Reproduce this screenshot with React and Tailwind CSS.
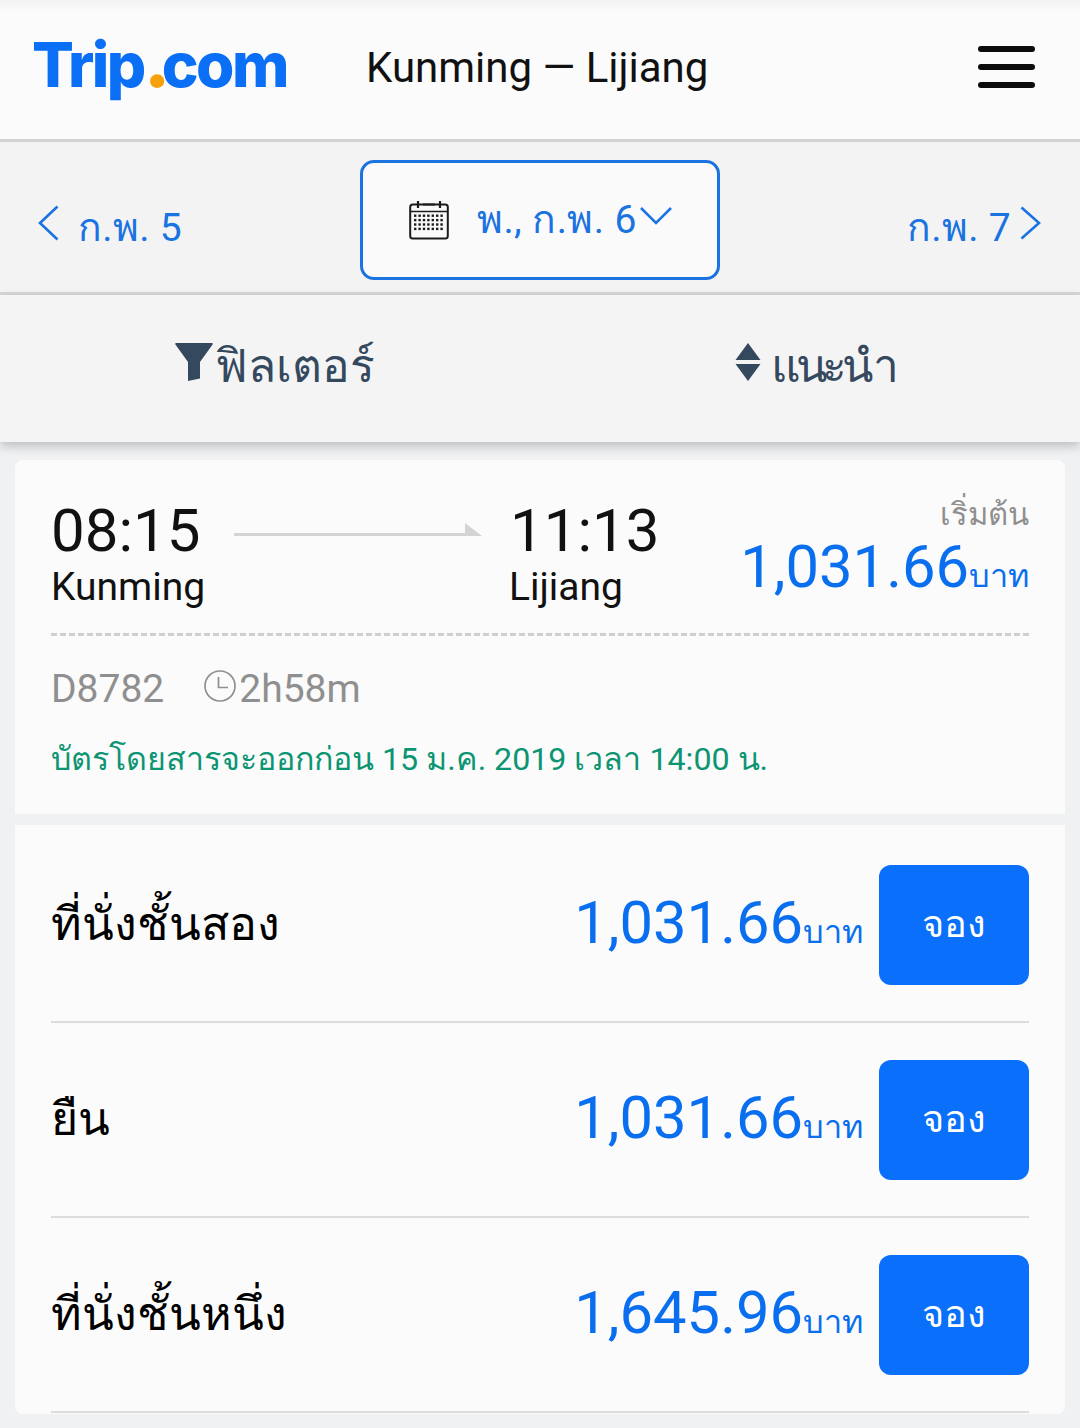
import React from 'react';

function Chevron({ d, w, h, className = '' }) {
    return (
        <svg width={w} height={h} viewBox={`0 0 ${w} ${h}`} fill="none" stroke="#1a73e0" strokeWidth="2.6" className={className}>
            <path d={d} />
        </svg>
    );
}

function CalendarIcon() {
    const dots = [];
    for (let r = 0; r < 4; r++) {
        for (let c = 0; c < 7; c++) {
            dots.push(<rect key={`${r}-${c}`} x={5 + c * 4.4} y={14.5 + r * 4.4} width="2.4" height="2.4" fill="#1c1c1c" />);
        }
    }
    return (
        <svg width="40" height="40" viewBox="0 0 40 40" fill="none">
            <rect x="1.2" y="4.5" width="37.6" height="34" rx="2.5" stroke="#1c1c1c" strokeWidth="2" />
            <path d="M1 11.5H39" stroke="#1c1c1c" strokeWidth="1.5" />
            <path d="M9 1v7M31 1v7M14 4.5h12" stroke="#1c1c1c" strokeWidth="2.2" />
            {dots}
        </svg>
    );
}

function FilterIcon() {
    return (
        <svg width="38" height="38" viewBox="0 0 38 38">
            <path d="M1 0h36c.8 0 1 .8.6 1.4L25 19v16.5L13 38V19L.4 1.4C0 .8.2 0 1 0z" fill="#34495e" />
        </svg>
    );
}

function SortIcon() {
    return (
        <svg width="26" height="38" viewBox="0 0 26 38">
            <path d="M13 0l12.5 17H.5z" fill="#34495e" />
            <path d="M.5 21h25L13 38z" fill="#34495e" />
        </svg>
    );
}

function ClockIcon() {
    return (
        <svg width="34" height="34" viewBox="0 0 34 34" fill="none" stroke="#8f8f8f" strokeWidth="1.7">
            <circle cx="17" cy="17" r="15" />
            <path d="M15.5 8v10.5H25" />
        </svg>
    );
}

function Price({ value }) {
    return (
        <div className="flex items-baseline text-[#0a6fef] leading-none">
            <span className="text-[59.7px] leading-none">{value}</span>
            <span className="text-[32.5px] leading-none">บาท</span>
        </div>
    );
}

function SeatRow({ name, price }) {
    return (
        <div className="h-[195px] flex items-center justify-between border-b-2 border-[#dcdcdc]">
            <span className="text-[46.5px] text-black">{name}</span>
            <div className="flex items-center gap-[16px]">
                <div className="-mt-[2px]">
                    <Price value={price} />
                </div>
                <button className="w-[150px] h-[120px] rounded-[12px] bg-[#0a6ffa] text-white text-[38px] font-medium">จอง</button>
            </div>
        </div>
    );
}

export default function App() {
    return (
        <div className='w-[1080px] h-[1428px] overflow-hidden bg-[#f0f1f3] font-["Roboto","Noto_Sans","DejaVu_Sans",sans-serif]'>
            {/* Header */}
            <header className="h-[142px] bg-gradient-to-b from-[#f2f2f2] to-[#fbfbfb] to-[12px] border-b-[3px] border-[#d2d2d2] pl-[32px] pr-[45px] pb-[4px] flex items-center">
                <div className="w-[334px] font-['Inter',sans-serif] text-[62px] font-extrabold tracking-[-2.5px] text-[#0a6ff5] leading-none -mt-[5px]">
                    Trip<span className="text-[76px] leading-[0] tracking-[-9px] text-[#f5a10c]">.</span>com
                </div>
                <div className="flex-1 text-[42px] text-[#111]">Kunming — Lijiang</div>
                <div className="w-[57px] flex flex-col gap-[12px] -mt-[2px]">
                    <span className="h-[6px] rounded-full bg-[#0c0c0c]"></span>
                    <span className="h-[6px] rounded-full bg-[#0c0c0c]"></span>
                    <span className="h-[6px] rounded-full bg-[#0c0c0c]"></span>
                </div>
            </header>

            {/* Date picker */}
            <div className="h-[153px] bg-[#f3f3f3] border-b-[3px] border-[#d8d8d8] px-[36px] flex items-center justify-between text-[#1a73e0] text-[39px]">
                <div className="w-[324px] flex items-center gap-[19px] pt-[22px]">
                    <Chevron w={22} h={36} d="M20.5 1.5L3 18l17.5 16.5" className="-mt-[10px] ml-[1px]" />
                    <span className="tracking-[0.3px]">ก.พ. 5</span>
                </div>
                <div className="w-[360px] h-[120px] mt-[6px] rounded-[14px] border-[3px] border-[#1a73e0] bg-[#fafafa] flex items-center pl-[46px]">
                    <CalendarIcon />
                    <span className="ml-[28px] tracking-[0.4px]">พ., ก.พ. 6</span>
                    <Chevron w={32} h={20} d="M1 2l15 15L31 2" className="-mt-[8px] ml-[3px]" />
                </div>
                <div className="w-[324px] flex items-center justify-end gap-[9px] pt-[22px]">
                    <span className="tracking-[0.3px]">ก.พ. 7</span>
                    <Chevron w={21} h={34} d="M1.5 1.5L19 17 1.5 32.5" className="-mt-[10px] mr-[3px]" />
                </div>
            </div>

            {/* Filter bar */}
            <div className="h-[147px] bg-[#f4f4f4] shadow-[0_4px_10px_rgba(0,0,0,0.22)] relative grid grid-cols-2 text-[46px] text-[#34495e] pb-[4px]">
                <div className="flex items-center justify-center gap-[2px] ml-[10px]">
                    <span className="-mt-[10px]"><FilterIcon /></span>
                    <span>ฟิลเตอร์</span>
                </div>
                <div className="flex items-center justify-center gap-[10px] ml-[8px]">
                    <span className="-mt-[10px]"><SortIcon /></span>
                    <span className="tracking-[-5px]">แนะนำ</span>
                </div>
            </div>

            {/* Train card */}
            <div className="mx-[15px] mt-[18px] h-[354px] bg-[#fbfbfb] rounded-t-[8px] px-[36px] pt-[33px]">
                <div className="h-[143px] flex border-b-[3px] border-dashed border-[#cfcfcf]">
                    <div className="w-[182px]">
                        <div className="text-[60px] text-[#111] leading-[76px]">08:15</div>
                        <div className="text-[39px] text-[#111] leading-[36px]">Kunming</div>
                    </div>
                    <div className="w-[248px] h-[16px] mt-[28px] ml-[1px]">
                        <svg width="248" height="16" viewBox="0 0 248 16" className="block">
                            <path d="M0 15h248L231 2v10H0z" fill="#d4d4d4" />
                        </svg>
                    </div>
                    <div className="ml-[28px] flex-1">
                        <div className="text-[60px] text-[#111] leading-[76px]">11:13</div>
                        <div className="text-[39px] text-[#111] leading-[36px] -ml-[1px]">Lijiang</div>
                    </div>
                    <div className="flex flex-col items-end -mt-[2px] pt-[1px]">
                        <div className="text-[31px] text-[#8f8f8f] leading-[46px]">เริ่มต้น</div>
                        <Price value="1,031.66" />
                    </div>
                </div>
                <div className="mt-[28px] flex items-center text-[39px] text-[#8f8f8f] leading-[50px]">
                    <span>D8782</span>
                    <span className="ml-[39px] -mt-[6px]"><ClockIcon /></span>
                    <span className="ml-[2px]">2h58m</span>
                </div>
                <div className="mt-[20px] text-[32.2px] text-[#0b9572] leading-[50px]">บัตรโดยสารจะออกก่อน 15 ม.ค. 2019 เวลา 14:00 น.</div>
            </div>

            {/* Seat list */}
            <div className="mx-[15px] mt-[11px] h-[589px] bg-[#fbfbfb] rounded-b-[8px] px-[36px] pt-[3px] flex flex-col">
                <SeatRow name="ที่นั่งชั้นสอง" price="1,031.66" />
                <SeatRow name="ยืน" price="1,031.66" />
                <SeatRow name="ที่นั่งชั้นหนึ่ง" price="1,645.96" />
            </div>
        </div>
    );
}
